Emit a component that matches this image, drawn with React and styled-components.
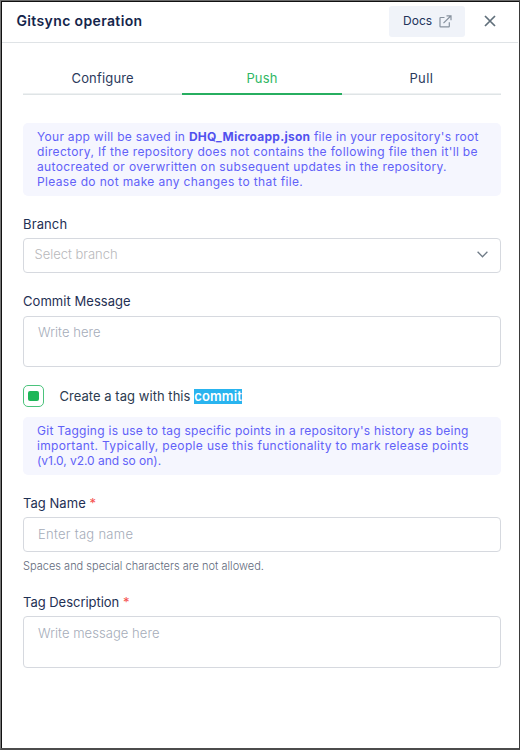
import React from "react";
import styled, { createGlobalStyle } from "styled-components";

const GlobalStyle = createGlobalStyle`
  * { box-sizing: border-box; }
  body { margin: 0; background: #fff; font-family: Inter, "Open Sans", sans-serif; }
`;

const Panel = styled.main`
  display: flex;
  flex-direction: column;
  width: 520px;
  height: 750px;
  background: #fff;
  border-style: solid;
  border-width: 1px 1px 2px 1px;
  border-color: #6b6b6b #3a3a3a #4c4c4c #777;
  box-shadow: inset 1px 1px 0 #111;
`;

const Header = styled.header`
  display: flex;
  align-items: center;
  flex: none;
  height: 42px;
  margin: 0 1px;
  padding: 0 22px 1px 14.5px;
  border-bottom: 1px solid #dfe3e6;
`;

const Title = styled.h1`
  margin: 0;
  flex: 1;
  font-size: 14px;
  line-height: 20px;
  font-weight: 600;
  letter-spacing: 0.36px;
  color: #14254b;
`;

const DocsButton = styled.button`
  display: flex;
  align-items: center;
  gap: 7px;
  width: 76px;
  height: 31px;
  padding: 0 0 0 14px;
  border: 0;
  border-radius: 3px;
  background: #f0f3f9;
  color: #22325a;
  font: 400 12px/16px Inter, sans-serif;
  letter-spacing: 0.02px;
`;

const CloseButton = styled.button`
  display: flex;
  margin-left: 19px;
  padding: 0;
  border: 0;
  background: none;
  color: #606f7b;
`;

const Body = styled.div`
  display: flex;
  flex-direction: column;
  padding: 17px 18px 0 22px;
`;

const Tabs = styled.nav`
  display: grid;
  grid-template-columns: repeat(3, 1fr);
  height: 35px;
`;

const Tab = styled.button`
  padding: 1px 0 0;
  border: 0;
  background: none;
  box-shadow: inset 0 -1px 0 ${(p) => (p.$active ? "#27ae60" : "#dfe4e6")},
    inset 0 -2px 0 ${(p) => (p.$active ? "#27ae60" : "#eef1f2")};
  color: ${(p) => (p.$active ? "#2fb765" : "#2b3a5c")};
  font: 400 13px/32px Inter, sans-serif;
  letter-spacing: ${(p) => p.$track}px;
`;

const Info = styled.p`
  margin: ${(p) => p.$top}px 0 0;
  height: ${(p) => p.$height}px;
  padding: 6px 14px 0;
  border-radius: 5px;
  background: #f5f6fe;
  color: #6161f8;
  font-size: 12px;
  line-height: 15px;
  font-weight: 400;
`;

const Line = styled.span`
  display: block;
  white-space: pre;
  letter-spacing: ${(p) => p.$track}px;
`;

const Strong = styled.strong`
  font-weight: 700;
  letter-spacing: 0.25px;
  color: #5151ee;
`;

const Label = styled.label`
  display: block;
  margin-top: ${(p) => p.$top}px;
  font-size: 13px;
  line-height: 18px;
  font-weight: 400;
  letter-spacing: ${(p) => p.$track}px;
  color: #1f3054;
`;

const Required = styled.span`
  color: #f5504e;
`;

const fieldStyle = `
  width: 100%;
  border: 1px solid #d6d9df;
  border-radius: 4px;
  background: #fff;
  font: 300 13px/18px Inter, sans-serif;
`;

const Select = styled.button`
  ${fieldStyle}
  display: flex;
  align-items: center;
  justify-content: space-between;
  height: 35px;
  margin-top: 5px;
  padding: 0 12px 3px 10.5px;
  color: #b8b8bb;
  letter-spacing: -0.02px;
`;

const Input = styled.input`
  ${fieldStyle}
  height: 35px;
  margin-top: 5px;
  padding: 0 14px 1px;
  &::placeholder { color: #a5acb9; opacity: 1; letter-spacing: 0.28px; }
`;

const TextArea = styled.textarea`
  ${fieldStyle}
  display: block;
  height: ${(p) => p.$height}px;
  margin-top: ${(p) => p.$top}px;
  padding: ${(p) => p.$pad}px 14px 0;
  resize: none;
  &::placeholder { color: #a5acb9; opacity: 1; letter-spacing: 0.05px; }
`;

const CheckRow = styled.div`
  display: flex;
  align-items: center;
  height: 22px;
  margin-top: 18px;
  font-size: 13px;
  line-height: 15px;
  font-weight: 400;
  color: #2c3b50;
  letter-spacing: 0.04px;
  white-space: pre;
`;

const CheckBox = styled.span`
  display: grid;
  place-items: center;
  width: 21px;
  height: 22px;
  margin-right: 15.5px;
  border: 1px solid #4bc37c;
  border-radius: 5px;
`;

const CheckMark = styled.span`
  width: 11px;
  height: 10px;
  border-radius: 2px;
  background: #1fb659;
`;

const Selected = styled.span`
  background: #29b4ef;
  color: #fff;
  font-weight: 600;
  letter-spacing: 0.17px;
`;

const Hint = styled.p`
  margin: 7px 0 0;
  font-size: 11px;
  line-height: 15px;
  letter-spacing: 0.01px;
  font-weight: 300;
  color: #626a7c;
`;

export default function App() {
  return (
    <>
      <GlobalStyle />
      <Panel>
        <Header>
          <Title>Gitsync operation</Title>
          <DocsButton>
            Docs
            <svg width="13" height="13" viewBox="0 0 13 13" fill="none" stroke="#87929e" strokeWidth="1.2">
              <path d="M5.5 2.5H1.6Q1 2.5 1 3.1V11.2Q1 11.8 1.6 11.8H9.7Q10.3 11.8 10.3 11.2V7.3M4.5 8.2L11.7 1M7.5 .8H12V5.3" />
            </svg>
          </DocsButton>
          <CloseButton aria-label="Close">
            <svg width="12" height="12" viewBox="0 0 12 12" fill="none" stroke="currentColor" strokeWidth="1.7">
              <path d="M1 1L11 11M11 1L1 11" />
            </svg>
          </CloseButton>
        </Header>
        <Body>
          <Tabs>
            <Tab $track={0.17}>Configure</Tab>
            <Tab $active $track={0.15}>Push</Tab>
            <Tab $track={0.35}>Pull</Tab>
          </Tabs>
          <Info $top={28} $height={73}>
            <Line $track={0.29}>
              Your app will be saved in <Strong>DHQ_Microapp.json</Strong> file in your repository's root
            </Line>
            <Line $track={0.34}>directory, If the repository does not contains the following file then it'll be</Line>
            <Line $track={0.36}>autocreated or overwritten on subsequent updates in the repository.</Line>
            <Line $track={0.36}>Please do not make any changes to that file.</Line>
          </Info>
          <Label $top={19} $track={0.12}>Branch</Label>
          <Select>
            Select branch
            <svg width="11" height="7" viewBox="0 0 11 7" fill="none" stroke="#6f7b87" strokeWidth="1.3">
              <path d="M.6 .7L5.5 5.7L10.4 .7" />
            </svg>
          </Select>
          <Label $top={19} $track={0.05}>Commit Message</Label>
          <TextArea $height={51} $top={6} $pad={6} placeholder="Write here" />
          <CheckRow>
            <CheckBox><CheckMark /></CheckBox>
            Create a tag with this <Selected>commit</Selected>
          </CheckRow>
          <Info $top={10} $height={58}>
            <Line $track={0.27}>Git Tagging is use to tag specific points in a repository's history as being</Line>
            <Line $track={0.34}>important. Typically, people use this functionality to mark release points</Line>
            <Line $track={-0.04}>(v1.0, v2.0 and so on).</Line>
          </Info>
          <Label $top={19} $track={0.04}>Tag Name <Required>*</Required></Label>
          <Input placeholder="Enter tag name" />
          <Hint>Spaces and special characters are not allowed.</Hint>
          <Label $top={19} $track={-0.03}>Tag Description <Required>*</Required></Label>
          <TextArea $height={52} $top={5} $pad={7} placeholder="Write message here" />
        </Body>
      </Panel>
    </>
  );
}
